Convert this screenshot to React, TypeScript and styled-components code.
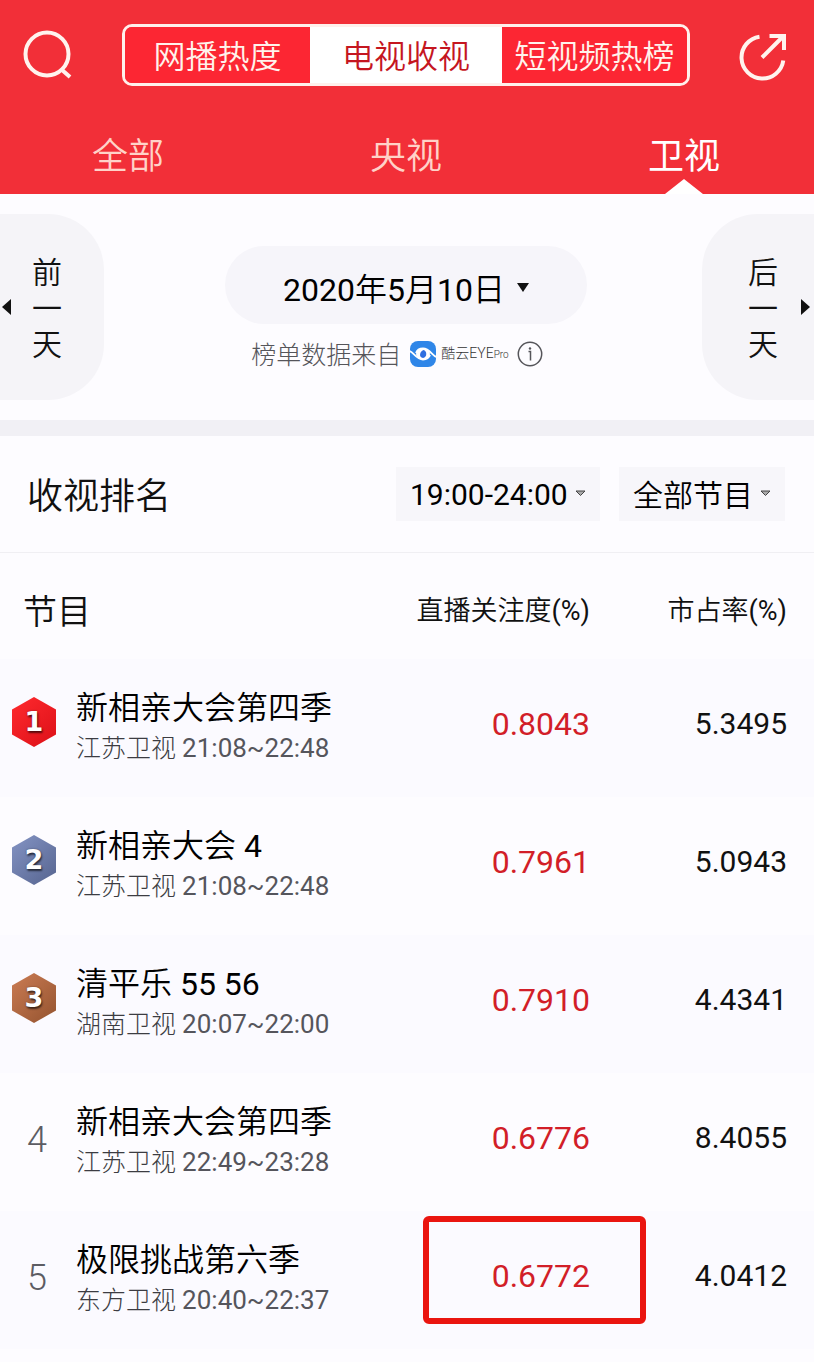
import React, { useState } from "react";
import styled, { createGlobalStyle, css } from "styled-components";

const GlobalStyle = createGlobalStyle`
  *, *::before, *::after { box-sizing: border-box; }
  body {
    margin: 0;
    background: #fdfcff;
    color: #111;
    font-family: Roboto, "Noto Sans CJK SC", sans-serif;
    font-weight: 350;
  }
  button, select {
    margin: 0;
    padding: 0;
    border: 0;
    background: none;
    color: inherit;
    font: inherit;
    cursor: pointer;
  }
`;

const Header = styled.header`
  padding-top: 24px;
  background: #f22f38;
  color: #fff;
`;

const TopBar = styled.div`
  display: flex;
  align-items: center;
  gap: 50px;
  padding: 0 26px 0 24px;
`;

const IconButton = styled.button`
  display: flex;
  flex: none;
  align-items: center;
  width: 48px;
  height: 50px;
  svg {
    overflow: visible;
  }
`;

const Segments = styled.div`
  display: grid;
  flex: 1;
  grid-template-columns: 1fr 1.04fr 1fr;
  height: 62px;
  border: 3px solid #fff0ec;
  border-radius: 10px;
  overflow: hidden;
`;

const Segment = styled.button<{ $active: boolean }>`
  padding-top: 4px;
  background: ${(p) => (p.$active ? "#fff" : "#fc2633")};
  color: ${(p) => (p.$active ? "#c5161f" : "#fff3ec")};
  font-size: 32px;
  line-height: 40px;
  white-space: nowrap;
`;

const Tabs = styled.nav`
  display: flex;
  justify-content: space-between;
  padding: 32px 94px 0 92px;
`;

const Tab = styled.button<{ $active: boolean }>`
  position: relative;
  height: 76px;
  padding-top: 2px;
  font-size: 36px;
  line-height: 40px;
  color: #ffd2c8;
  ${(p) =>
    p.$active &&
    css`
      color: #fff;
      font-weight: 400;
      &::after {
        content: "";
        position: absolute;
        bottom: 0;
        left: 50%;
        width: 38px;
        height: 15px;
        background: #fff;
        clip-path: polygon(50% 0, 100% 100%, 0 100%);
        transform: translateX(-50%);
      }
    `}
`;

const DateBar = styled.section`
  display: flex;
  justify-content: space-between;
  padding: 20px 0;
  border-bottom: 16px solid #f1f0f5;
`;

const DayButton = styled.button<{ $side: "prev" | "next" }>`
  display: flex;
  flex: none;
  align-items: center;
  height: 186px;
  background: #f5f4f8;
  font-size: 30px;
  line-height: 36px;
  ${(p) =>
    p.$side === "prev"
      ? css`
          width: 104px;
          gap: 21px;
          padding-left: 2px;
          border-radius: 0 56px 56px 0;
        `
      : css`
          width: 112px;
          gap: 23px;
          justify-content: flex-end;
          padding-right: 4px;
          border-radius: 56px 0 0 56px;
        `}
`;

const DayText = styled.span`
  width: 30px;
  padding-top: 4px;
`;

const DateColumn = styled.div`
  display: flex;
  flex-direction: column;
  align-items: center;
  padding: 32px 0 0 6px;
`;

const DateButton = styled.button`
  display: flex;
  align-items: center;
  justify-content: center;
  gap: 12px;
  width: 362px;
  height: 78px;
  padding-top: 4px;
  border-radius: 39px;
  background: #f6f5fa;
  font-size: 32px;
  font-weight: 350;
  color: #000;
`;

/* Roboto has no weight between light and regular, so figures are set in regular. */
const Figures = styled.span`
  font-weight: 400;
`;

const Source = styled.div`
  display: flex;
  align-items: center;
  height: 36px;
  margin-top: 12px;
  padding-right: 18px;
  color: #55555a;
  font-size: 25px;
  font-weight: 300;
  line-height: 36px;
`;

const SourceText = styled.span`
  padding-top: 4px;
`;

const Wordmark = styled.span`
  margin: 0 8px 0 5px;
  color: #333;
  font-size: 14px;
  line-height: 20px;
  small {
    font-size: 10px;
  }
`;

const LogoSvg = styled.svg`
  flex: none;
  margin-left: 9px;
`;

const InfoButton = styled.button`
  display: flex;
`;

const RankBar = styled.section`
  display: flex;
  align-items: center;
  gap: 19px;
  padding: 31px 29px 31px 27px;
  border-bottom: 1px solid #f0eff3;
`;

const Title = styled.h2`
  flex: 1;
  margin: 0;
  padding-top: 6px;
  font-size: 36px;
  font-weight: 350;
  line-height: 48px;
`;

const Picker = styled.label`
  position: relative;
  svg {
    position: absolute;
    top: 23px;
    right: 14px;
    pointer-events: none;
  }
`;

const Select = styled.select<{ $latin?: boolean }>`
  appearance: none;
  display: block;
  height: 54px;
  padding: ${(p) => (p.$latin ? "0 32px 0 14px" : "2px 32px 0 14px")};
  background: #f7f6fa;
  color: #000;
  font-size: 30px;
  font-weight: ${(p) => (p.$latin ? 400 : 350)};
`;

const Table = styled.table`
  width: 100%;
  table-layout: fixed;
  border-collapse: collapse;
`;

const HeadCell = styled.th<{ $name?: boolean; $flush?: boolean }>`
  height: 106px;
  padding: ${(p) => (p.$name ? "12px 0 0 23px" : p.$flush ? "10px 0 0" : "10px 27px 0 0")};
  text-align: ${(p) => (p.$name ? "left" : "right")};
  font-size: ${(p) => (p.$name ? 34 : 27)}px;
  font-weight: 350;
  line-height: 40px;
  white-space: nowrap;
`;

const Row = styled.tr`
  height: 138px;
  &:nth-child(odd) {
    background: #fbfaff;
  }
`;

const RankCell = styled.td`
  padding: 0 2px 4px 0;
  text-align: center;
  color: #5c5c63;
  font-size: 36px;
  font-weight: 300;
  line-height: 40px;
`;

const NameCell = styled.td`
  padding: 0;
  white-space: nowrap;
`;

const Name = styled.div`
  font-size: 32px;
  line-height: 40px;
  color: #000;
`;

const Meta = styled.div`
  font-size: 25px;
  font-weight: 300;
  line-height: 40px;
  color: #3c3c42;
`;

const Time = styled.span`
  color: #55555c;
  font-size: 26px;
  font-weight: 400;
`;

const NumberCell = styled.td<{ $accent?: boolean }>`
  padding: ${(p) => (p.$accent ? "0 0 8px" : "0 27px 8px 0")};
  text-align: right;
  font-size: ${(p) => (p.$accent ? 32 : 30)}px;
  line-height: 40px;
  font-weight: 400;
  color: ${(p) => (p.$accent ? "#d21e28" : "#111")};
`;

const Value = styled.span<{ $marked?: boolean }>`
  position: relative;
  display: inline-block;
  ${(p) =>
    p.$marked &&
    css`
      &::after {
        content: "";
        position: absolute;
        inset: -40px -56px -28px -69px;
        border: 6px solid #ea1510;
        border-radius: 6px;
      }
    `}
`;

const Badge = styled.span<{ $from: string; $to: string }>`
  display: flex;
  align-items: center;
  justify-content: center;
  width: 44px;
  height: 50px;
  margin: 0 0 8px 12px;
  background: linear-gradient(135deg, ${(p) => p.$from}, ${(p) => p.$to});
  clip-path: polygon(50% 0, 100% 25%, 100% 75%, 50% 100%, 0 75%, 0 25%);
  color: #fff;
  font-family: "DejaVu Sans", sans-serif;
  font-size: 27px;
  font-weight: 700;
  line-height: 50px;
  text-shadow: 1px 2px 2px rgba(0, 0, 0, 0.6), 0 0 2px rgba(0, 0, 0, 0.4);
`;

const SearchIcon = () => (
  <svg width="48" height="48" viewBox="0 0 48 48" fill="none" stroke="#fff3ee" strokeWidth="4">
    <circle cx="23" cy="23" r="21.5" />
    <path d="M37.5 38.5 46 46" />
  </svg>
);

const ShareIcon = () => (
  <svg width="48" height="50" viewBox="0 0 48 50" fill="none" stroke="#fff3ee" strokeWidth="4">
    <path d="M19.500 6.700A21 21 0 1 0 43.300 30.500" />
    <path d="M22 27.500 43 6.500M29.500 6H44V20" />
  </svg>
);

const Triangle = ({ w, h, d }: { w: number; h: number; d: string }) => (
  <svg width={w} height={h} viewBox={`0 0 ${w} ${h}`} aria-hidden="true">
    <path d={d} fill="#111" />
  </svg>
);

const PickerArrow = () => (
  <svg width="11" height="7" viewBox="0 0 11 7" aria-hidden="true">
    <path d="M1 1h9L5.500 5.500z" fill="#aaa" stroke="#444" />
  </svg>
);

const Logo = () => (
  <LogoSvg width="26" height="26" viewBox="0 0 26 26" aria-hidden="true">
    <rect x="0" y="0" width="26" height="26" rx="8" fill="#2f86e8" />
    <ellipse cx="13" cy="13" rx="7" ry="5.500" fill="#fff" />
    <path
      d="M-1 10C3 10 6 18.500 13 18.500C17 18.500 19 17 20 14M27 16C23 16 20 7.500 13 7.500C9 7.500 7 9 6 12"
      fill="none"
      stroke="#fff"
      strokeWidth="1.800"
    />
    <path d="M13.500 9C17 9.500 17.500 16.500 13 17C8.500 16.500 9.500 10.500 13.500 9Z" fill="#2f6fe0" />
  </LogoSvg>
);

const InfoIcon = () => (
  <svg width="26" height="26" viewBox="0 0 26 26" fill="none" stroke="#55555a">
    <circle cx="13" cy="13" r="11.700" strokeWidth="1.500" />
    <path d="M11.500 10.500H13.500V19.500" strokeWidth="1.500" />
    <circle cx="13" cy="7.500" r="1.200" fill="#55555a" stroke="none" />
  </svg>
);

const segments = ["网播热度", "电视收视", "短视频热榜"];
const tabs = ["全部", "央视", "卫视"];
const badges: Record<number, [string, string]> = {
  1: ["#ff2a2e", "#dc1018"],
  2: ["#8494c4", "#56648f"],
  3: ["#cb7c54", "#94532f"],
};
const rows = [
  { name: "新相亲大会第四季", channel: "江苏卫视", time: "21:08~22:48", focus: "0.8043", share: "5.3495" },
  { name: "新相亲大会", part: "4", channel: "江苏卫视", time: "21:08~22:48", focus: "0.7961", share: "5.0943" },
  { name: "清平乐", part: "55 56", channel: "湖南卫视", time: "20:07~22:00", focus: "0.7910", share: "4.4341" },
  { name: "新相亲大会第四季", channel: "江苏卫视", time: "22:49~23:28", focus: "0.6776", share: "8.4055" },
  { name: "极限挑战第六季", channel: "东方卫视", time: "20:40~22:37", focus: "0.6772", share: "4.0412", marked: true },
];

export default function App() {
  const [segment, setSegment] = useState(1);
  const [tab, setTab] = useState(2);

  return (
    <>
      <GlobalStyle />
      <Header>
        <TopBar>
          <IconButton aria-label="搜索"><SearchIcon /></IconButton>
          <Segments>
            {segments.map((s, i) => (
              <Segment key={s} $active={i === segment} onClick={() => setSegment(i)}>{s}</Segment>
            ))}
          </Segments>
          <IconButton aria-label="分享"><ShareIcon /></IconButton>
        </TopBar>
        <Tabs>
          {tabs.map((t, i) => (
            <Tab key={t} $active={i === tab} onClick={() => setTab(i)}>{t}</Tab>
          ))}
        </Tabs>
      </Header>
      <main>
        <DateBar>
          <DayButton $side="prev">
            <Triangle w={9} h={16} d="M9 0v16L0 8z" />
            <DayText>前一天</DayText>
          </DayButton>
          <DateColumn>
            <DateButton>
              <span>
                <Figures>2020</Figures>年<Figures>5</Figures>月<Figures>10</Figures>日
              </span>
              <Triangle w={12} h={9} d="M0 0h12L6 9z" />
            </DateButton>
            <Source>
              <SourceText>榜单数据来自</SourceText>
              <Logo />
              <Wordmark>酷云EYE<small>Pro</small></Wordmark>
              <InfoButton aria-label="说明"><InfoIcon /></InfoButton>
            </Source>
          </DateColumn>
          <DayButton $side="next">
            <DayText>后一天</DayText>
            <Triangle w={9} h={16} d="M0 0v16l9-8z" />
          </DayButton>
        </DateBar>
        <RankBar>
          <Title>收视排名</Title>
          <Picker>
            <Select $latin aria-label="时段">
              <option>19:00-24:00</option>
            </Select>
            <PickerArrow />
          </Picker>
          <Picker>
            <Select aria-label="节目类型">
              <option>全部节目</option>
            </Select>
            <PickerArrow />
          </Picker>
        </RankBar>
        <Table>
          <colgroup>
            <col width="76" />
            <col />
            <col width="200" />
            <col width="224" />
          </colgroup>
          <thead>
            <tr>
              <HeadCell $name colSpan={2}>节目</HeadCell>
              <HeadCell $flush>直播关注度<Figures>(%)</Figures></HeadCell>
              <HeadCell>市占率<Figures>(%)</Figures></HeadCell>
            </tr>
          </thead>
          <tbody>
            {rows.map((r, i) => {
              const badge = badges[i + 1];
              return (
                <Row key={i}>
                  <RankCell>
                    {badge ? <Badge $from={badge[0]} $to={badge[1]}>{i + 1}</Badge> : i + 1}
                  </RankCell>
                  <NameCell>
                    <Name>{r.name}{r.part && <Figures> {r.part}</Figures>}</Name>
                    <Meta>{r.channel} <Time>{r.time}</Time></Meta>
                  </NameCell>
                  <NumberCell $accent><Value $marked={r.marked}>{r.focus}</Value></NumberCell>
                  <NumberCell>{r.share}</NumberCell>
                </Row>
              );
            })}
          </tbody>
        </Table>
      </main>
    </>
  );
}
